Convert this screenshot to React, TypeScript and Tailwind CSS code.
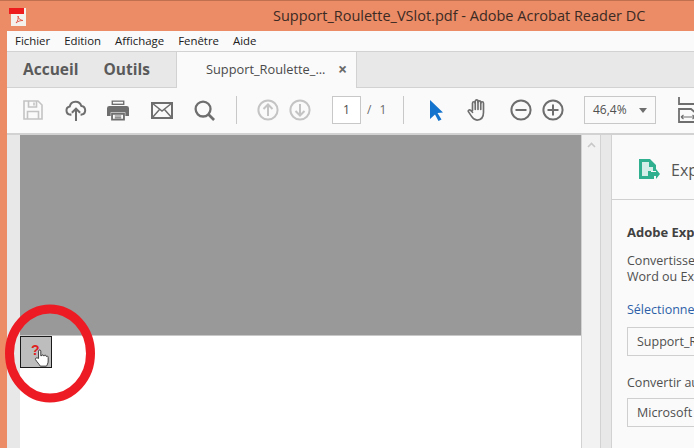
const font = { fontFamily: '"Open Sans", "Noto Sans", sans-serif' };

function Circle({ children, color }: { children: React.ReactNode; color: string }) {
  return (
    <svg width="22" height="22" viewBox="0 0 22 22" fill="none" stroke={color} strokeWidth="2" className="shrink-0">
      <circle cx="11" cy="11" r="9.6" />
      {children}
    </svg>
  );
}

function Toolbar() {
  return (
    <div className="h-[47px] shrink-0 bg-[#fafafa] border-b-[2px] border-[#d2d2d2] flex items-center overflow-hidden text-[#6e6e6e] pb-[1px]">
      <svg width="20" height="20" viewBox="0 0 20 20" fill="none" stroke="#c4c4c4" strokeWidth="1.6" className="ml-[16px] shrink-0">
        <path d="M1 1h14l4 4v14H1z" />
        <path d="M5.500 1v6h8V1M11 2.500v3M4.500 19v-7.500h11V19" />
      </svg>
      <svg width="22" height="23" viewBox="0 0 24 25" fill="none" stroke="#6e6e6e" strokeWidth="2.200" className="ml-[22px] shrink-0">
        <path d="M7 17H6a4.500 4.500 0 0 1-.8-8.900 6.500 6.500 0 0 1 12.600-.6A4.800 4.800 0 0 1 18 17h-1" />
        <path d="M12 24V11M7.500 15l4.500-4.500 4.500 4.500" />
      </svg>
      <svg width="22" height="21" viewBox="0 0 24 22" className="ml-[20px] shrink-0">
        <path d="M5 0h14v5H5z M2.500 6h19A2.500 2.500 0 0 1 24 8.500V17h-4v-4H4v4H0V8.500A2.500 2.500 0 0 1 2.500 6z" fill="#6e6e6e" />
        <path d="M6.500 2.500h11" stroke="#fafafa" strokeWidth="2" />
        <path d="M5.500 14.500h13V21h-13z" fill="none" stroke="#6e6e6e" strokeWidth="2" />
        <path d="M8.500 17h7M8.500 19h7" stroke="#6e6e6e" strokeWidth="1.200" />
      </svg>
      <svg width="22" height="17" viewBox="0 0 22 17" fill="none" stroke="#6e6e6e" strokeWidth="2" className="ml-[22px] shrink-0">
        <path d="M1 1h20v15H1z" />
        <path d="M1 1l10 8 10-8M1 16l7.500-8.500M21 16l-7.500-8.500" strokeWidth="1.500" />
      </svg>
      <svg width="21" height="21" viewBox="0 0 22 22" fill="none" stroke="#6e6e6e" strokeWidth="2.400" className="ml-[21px] shrink-0">
        <circle cx="9.500" cy="9.500" r="7.800" />
        <path d="M15 15l6 6" strokeWidth="2.800" />
      </svg>
      <div className="w-[1px] h-[28px] bg-[#c8c8c8] ml-[21px] shrink-0" />
      <div className="ml-[20px] shrink-0 flex">
        <Circle color="#c4c4c4"><path d="M11 17V5.500M6.500 10l4.500-4.500 4.500 4.500" /></Circle>
      </div>
      <div className="ml-[10px] shrink-0 flex">
        <Circle color="#c4c4c4"><path d="M11 5v11.500M6.500 12l4.500 4.500 4.500-4.500" /></Circle>
      </div>
      <div className="ml-[21px] w-[29px] h-[28px] border border-[#c8c8c8] bg-white shrink-0 flex items-center justify-center text-[12px] text-[#4d4d4d]">1</div>
      <div className="ml-[6px] w-[30px] text-[12px] text-[#6a6a6a] flex gap-[8px] shrink-0"><span>/</span><span>1</span></div>
      <div className="w-[1px] h-[28px] bg-[#c8c8c8] ml-[6px] shrink-0" />
      <svg width="14" height="21" viewBox="0 0 14 21" className="ml-[26px] shrink-0">
        <path d="M0 0l13 12.500-5.500.5 4 6.500-3 1.500-3.500-6.500L0 19z" fill="#1473cc" />
      </svg>
      <svg width="22" height="24" viewBox="0 0 24 25" fill="none" stroke="#6e6e6e" strokeWidth="1.800" strokeLinecap="round" strokeLinejoin="round" className="ml-[23px] shrink-0">
        <path d="M6 13V5a1.500 1.500 0 0 1 3 0V3a1.500 1.500 0 0 1 3 0v1a1.500 1.500 0 0 1 3 0v1a1.500 1.500 0 0 1 3 0v10c0 5-2.500 8.500-7 8.500-3 0-4.500-1.500-6-4l-3.300-5c-1-1.500 1-3 2.300-1.600L6 15" />
        <path d="M9 5v7M12 3v9M15 4v8" />
      </svg>
      <div className="ml-[21px] shrink-0 flex">
        <Circle color="#6e6e6e"><path d="M5.500 11h11" /></Circle>
      </div>
      <div className="ml-[10px] shrink-0 flex">
        <Circle color="#6e6e6e"><path d="M5.500 11h11M11 5.500v11" /></Circle>
      </div>
      <div className="ml-[20px] w-[72px] h-[28px] border border-[#c8c8c8] shrink-0 flex items-center pl-[8px] text-[12px] text-[#505050] relative">
        46,4%
        <svg width="8" height="5" viewBox="0 0 8 5" className="absolute right-[8px] top-[11px]"><path d="M0 0h8L4 5z" fill="#6e6e6e" /></svg>
      </div>
      <svg width="24" height="26" viewBox="0 0 24 26" fill="none" stroke="#6e6e6e" strokeWidth="1.800" className="ml-[22px] shrink-0">
        <path d="M1 0v7h18V0M1 25V12h12l6 5v8z" />
        <path d="M3 20h14M3 20l2.500-2M3 20l2.500 2M17 20l-2.500-2M17 20l-2.500 2" strokeWidth="1.100" />
      </svg>
    </div>
  );
}

function Side() {
  return (
    <div className="w-[83px] shrink-0 bg-[#fafafa] text-[#4f4f4f] overflow-hidden whitespace-nowrap border-l border-[#d2d2d2]">
      <div className="h-[65px] border-b border-[#d0d0d0] flex items-center pl-[27px] gap-[11px] pt-[6px]">
        <svg width="21" height="22" viewBox="0 0 21 22" className="shrink-0">
          <path d="M0 0h11l6 6v6h-5v5h3v3H0z" fill="#30b08f" />
          <path d="M3 3h7v5h4v4H9v5H3z" fill="#d5efe8" />
          <path d="M10 13h7v-3l4 5-4 5v-3h-7z" fill="#30b08f" />
        </svg>
        <span className="text-[16px] text-[#555]">Exp</span>
      </div>
      <div className="pl-[15px] pt-[24px] text-[12.500px] leading-[16px]">
        <div className="font-bold text-[13px] text-[#414141] h-[17px]">Adobe Exp</div>
        <div className="mt-[12px]">Convertisse</div>
        <div>Word ou Ex</div>
        <div className="mt-[17px] text-[#2d5fa8] h-[17px]">Sélectionne</div>
        <div className="mt-[8px] -mr-[30px] h-[29px] border border-[#cfcfcf] flex items-center pl-[9px]">Support_R</div>
        <div className="mt-[19px] h-[17px]">Convertir au</div>
        <div className="mt-[6px] -mr-[30px] h-[29px] border border-[#cfcfcf] flex items-center pl-[9px]">Microsoft</div>
      </div>
    </div>
  );
}

export default function App() {
  return (
    <div className="relative w-[694px] h-[448px] overflow-hidden flex flex-col bg-[#eb8c66]" style={font}>
      <div className="h-[31px] shrink-0 border-t border-[#c0704f] relative flex items-center pl-[273px] text-[14.500px] text-[#3b2a24] whitespace-nowrap">
        <svg width="18" height="20" viewBox="0 0 18 20" className="absolute left-[9px] top-[6px]">
          <path d="M2 1h15v18H2z" fill="#f4f0ec" />
          <path d="M0 1h15v6H0z" fill="#ee1c1c" />
          <path d="M7 16c2-2 2.500-5 2-7 .5 3 2 4 5 4.500-3 0-5 .8-7 2.500z" fill="none" stroke="#e25c4a" strokeWidth="1" />
        </svg>
        <span className="mt-[-1px]">Support_Roulette_VSlot.pdf - Adobe Acrobat Reader DC</span>
      </div>
      <div className="flex-1 min-h-0 ml-[7px] flex flex-col">
        <div className="h-[20px] shrink-0 bg-[#fafafa] flex items-center pl-[8px] gap-[14px] text-[11.400px] text-[#202020]">
          <span>Fichier</span><span>Edition</span><span>Affichage</span><span>Fenêtre</span><span>Aide</span>
        </div>
        <div className="h-[37px] shrink-0 flex bg-[#e8e8e8] border-y-[1px] border-[#d2d2d2]">
          <div className="w-[170px] shrink-0 flex items-center pl-[16px] gap-[25px] text-[15.500px] font-bold text-[#5a5a5a] border-r border-[#d2d2d2]">
            <span>Accueil</span><span>Outils</span>
          </div>
          <div className="w-[180px] -mb-[1px] shrink-0 bg-[#fafafa] border-r border-[#d2d2d2] flex items-center pl-[29px] text-[12.800px] text-[#4a4a4a] relative">
            <span>Support_Roulette_...</span>
            <span className="absolute left-[161px] top-[9px] text-[16px] font-bold text-[#6a6a6a] leading-none">×</span>
          </div>
        </div>
        <Toolbar />
        <div className="flex-1 min-h-0 flex">
          <div className="w-[13px] shrink-0 bg-[#e8e8e8]" />
          <div className="w-[562px] shrink-0 flex flex-col bg-white border-r border-[#d2d2d2]">
            <div className="h-[201px] shrink-0 bg-[#999999] border-b border-[#c8c8c8]" />
            <div className="flex-1">
              <div className="w-[32px] h-[32px] bg-[#bdbdbd] border border-[#1a1a1a] relative">
                <span className="absolute left-[10px] top-[5px] text-[14px] font-bold leading-[16px] text-[#e01f1f]" style={{ fontFamily: '"Liberation Sans", sans-serif' }}>?</span>
                <svg width="16" height="18" viewBox="0 0 18 21" className="absolute left-[13px] top-[12px]">
                  <path d="M5 11V2.500a1.300 1.300 0 0 1 2.600 0V8l1-.2a1 1 0 0 1 2 0l1 .2a1 1 0 0 1 2 .3l1 .4a1 1 0 0 1 1.600 1V14c0 3-1.500 5-2 6H7c-1-2-4-5-5.500-7.500C.5 11 2.500 9.500 5 11z" fill="#fff" stroke="#222" strokeWidth="1" />
                </svg>
              </div>
            </div>
          </div>
          <div className="w-[18px] shrink-0 bg-[#f2f2f2] flex justify-center pt-[7px]">
            <svg width="9" height="6" viewBox="0 0 9 6" fill="none" stroke="#c8c8c8" strokeWidth="1.600"><path d="M1 5l3.500-3.500L8 5" /></svg>
          </div>
          <div className="w-[11px] shrink-0 bg-[#e8e8e8] border-l border-[#d2d2d2]" />
          <Side />
        </div>
      </div>
      <svg width="694" height="448" viewBox="0 0 694 448" className="absolute left-0 top-0 pointer-events-none" fill="none">
        <ellipse cx="50" cy="353.500" rx="40.500" ry="44.500" stroke="#ed1c24" strokeWidth="9" />
      </svg>
    </div>
  );
}
